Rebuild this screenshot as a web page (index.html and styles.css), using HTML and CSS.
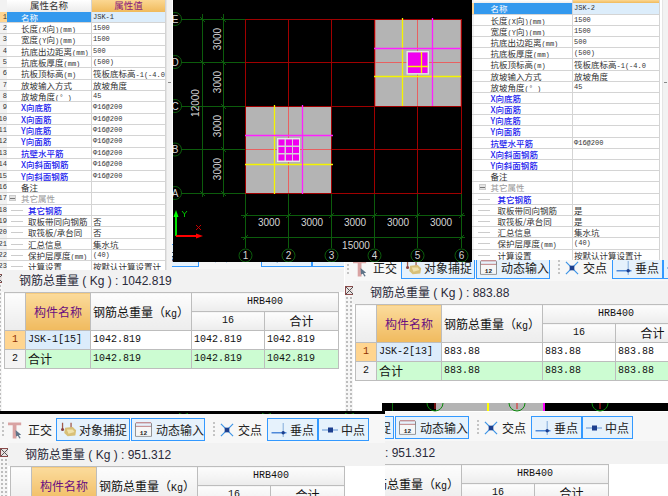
FILE: index.html
```html
<!DOCTYPE html>
<html lang="zh">
<head>
<meta charset="utf-8">
<title>钢筋总重量</title>
<link rel="stylesheet" href="styles.css">
</head>
<body>
<svg class="defs" width="0" height="0" aria-hidden="true">
  <symbol id="i-ortho" viewBox="0 0 17 18">
    <path d="M0 1h14v3H9v14H5V4H0z" fill="#d9a3a3"/>
    <path d="M8 9l6 5-2.500 .5 2 3-1.500 .5-1.500-3L8.500 16z" fill="#5f7488"/>
  </symbol>
  <symbol id="i-snap" viewBox="0 0 20 18">
    <path d="M3 1v8M13 1v8" stroke="#a05a4a" stroke-width="1.500"/>
    <circle cx="3" cy="9" r="1.800" fill="#8a4040"/>
    <path d="M6 7l9-1 4 4-1 6-9 1-4-4z" fill="#d8c078"/>
    <path d="M8 9l7 0 2 3-7 2z" fill="#efe2ac"/>
  </symbol>
  <symbol id="i-dyn" viewBox="0 0 19 16">
    <path d="M1 .5h17M1 4.500h17" stroke="#b05a5a" fill="none"/>
    <path d="M.5 1v14.500h18V1" stroke="#777" fill="none"/>
    <rect x="1" y="5" width="17" height="10" fill="#f6f6f6"/>
    <text class="i-num" x="9.500" y="14" text-anchor="middle">12</text>
  </symbol>
  <symbol id="i-cross" viewBox="0 0 15 15">
    <path d="M1 1l13 13M14 1L1 14" stroke="#3d94e6" stroke-width="1.300"/>
    <rect x="5" y="5" width="5" height="5" fill="#1c3f8f"/>
  </symbol>
  <symbol id="i-perp" viewBox="0 0 16 15">
    <path d="M0 10.500h16" stroke="#2a6fd0" stroke-width="1.300"/>
    <path d="M12.500 0v15" stroke="#7aa6d8"/>
    <circle cx="12.500" cy="10.500" r="1.800" fill="#1c3f8f"/>
  </symbol>
  <symbol id="i-mid" viewBox="0 0 16 7">
    <path d="M0 3.500h16" stroke="#7fa8dc" stroke-width="1.300"/>
    <rect x="6" y="1" width="5" height="5" fill="#1c3f8f"/>
  </symbol>
  <symbol id="i-close" viewBox="0 0 9 9">
    <rect x=".5" y=".5" width="8" height="8" fill="#e8e0e0" stroke="#8a4a4a"/>
    <path d="M1 1l7 7M8 1L1 8" stroke="#555"/>
  </symbol>
</svg>

<section class="win win-left">
  <div class="toolbar">
    <span class="grip"></span>
    <span class="tool tool-first"><svg class="ic ic-o"><use href="#i-ortho"/></svg>正交</span>
    <span class="tool btn"><svg class="ic ic-s"><use href="#i-snap"/></svg>对象捕捉</span>
    <span class="tool btn"><svg class="ic ic-d"><use href="#i-dyn"/></svg>动态输入</span>
    <span class="grip grip-2"></span>
    <span class="tool tool-x"><svg class="ic ic-x"><use href="#i-cross"/></svg>交点</span>
    <span class="tool btn btn-s"><svg class="ic ic-p"><use href="#i-perp"/></svg>垂点</span>
    <span class="tool btn btn-s"><svg class="ic ic-p"><use href="#i-mid"/></svg>中点</span>
  </div>
  <div class="body">
    <div class="strip"><svg class="close"><use href="#i-close"/></svg></div>
    <div class="main">
      <div class="title">钢筋总重量 ( Kg ) : 1042.819</div>
      <table class="grid">
        <colgroup><col class="c0"><col class="c1"><col class="c2"><col class="c3"><col class="c4"></colgroup>
        <thead>
          <tr><th rowspan="2"></th><th rowspan="2" class="hl">构件名称</th><th rowspan="2" class="cn lead">钢筋总重量（<span class="mono">Kg</span>）</th><th colspan="2">HRB400</th></tr>
          <tr><th>16</th><th class="cn">合计</th></tr>
        </thead>
        <tbody>
          <tr><td class="idx sel">1</td><td class="pick">JSK-1[15]</td><td>1042.819</td><td>1042.819</td><td>1042.819</td></tr>
          <tr class="sum"><td class="idx">2</td><td class="cn">合计</td><td>1042.819</td><td>1042.819</td><td>1042.819</td></tr>
        </tbody>
      </table>
    </div>
  </div>
</section>

<section class="win win-right">
  <div class="toolbar">
    <span class="grip"></span>
    <span class="tool tool-first"><svg class="ic ic-o"><use href="#i-ortho"/></svg>正交</span>
    <span class="tool btn"><svg class="ic ic-s"><use href="#i-snap"/></svg>对象捕捉</span>
    <span class="tool btn"><svg class="ic ic-d"><use href="#i-dyn"/></svg>动态输入</span>
    <span class="grip grip-2"></span>
    <span class="tool tool-x"><svg class="ic ic-x"><use href="#i-cross"/></svg>交点</span>
    <span class="tool btn btn-s"><svg class="ic ic-p"><use href="#i-perp"/></svg>垂点</span>
    <span class="tool btn btn-s"><svg class="ic ic-p"><use href="#i-mid"/></svg>中点</span>
  </div>
  <div class="body">
    <div class="strip"><svg class="close"><use href="#i-close"/></svg></div>
    <div class="main">
      <div class="title">钢筋总重量 ( Kg ) : 883.88</div>
      <table class="grid">
        <colgroup><col class="c0"><col class="c1"><col class="c2"><col class="c3"><col class="c4"></colgroup>
        <thead>
          <tr><th rowspan="2"></th><th rowspan="2" class="hl">构件名称</th><th rowspan="2" class="cn lead">钢筋总重量（<span class="mono">Kg</span>）</th><th colspan="2">HRB400</th></tr>
          <tr><th>16</th><th class="cn">合计</th></tr>
        </thead>
        <tbody>
          <tr><td class="idx sel">1</td><td class="pick">JSK-2[13]</td><td>883.88</td><td>883.88</td><td>883.88</td></tr>
          <tr class="sum"><td class="idx">2</td><td class="cn">合计</td><td>883.88</td><td>883.88</td><td>883.88</td></tr>
        </tbody>
      </table>
    </div>
  </div>
</section>

<svg class="cad" viewBox="0 0 299 262" role="img" aria-label="基础平面图">
  <rect width="299" height="262" fill="#000"/>
  <g transform="translate(-173 0)">
    <g class="gl">
      <path d="M181 19.500H246M181 62.500H246M181 106.500H246M181 149.500H246M181 193.500H246"/>
      <path d="M245.500 193V248M288.500 193V248M331.500 193V248M374.500 193V248M417.500 193V248M461.500 193V248"/>
      <path d="M202.500 14V197M223.500 14V197M241 215.500H465M241 237.500H465"/>
      <path d="M200 17l5 5M221 17l5 5M200 60l5 5M221 60l5 5M221 104l5 5M221 147l5 5M200 191l5 5M221 191l5 5"/>
      <path d="M243 218l5-5M286 218l5-5M329 218l5-5M372 218l5-5M415 218l5-5M459 218l5-5M243 240l5-5M459 240l5-5"/>
      <circle cx="175" cy="19" r="6.500"/><circle cx="175" cy="62" r="6.500"/><circle cx="175" cy="106" r="6.500"/><circle cx="175" cy="149.500" r="6.500"/><circle cx="175" cy="193" r="6.500"/>
      <circle cx="245.500" cy="255.500" r="6.500"/><circle cx="288.500" cy="255.500" r="6.500"/><circle cx="331.500" cy="255.500" r="6.500"/><circle cx="374.500" cy="255.500" r="6.500"/><circle cx="417.500" cy="255.500" r="6.500"/><circle cx="461.500" cy="255.500" r="6.500"/>
    </g>
    <rect class="slab" x="245.500" y="106.500" width="86" height="87"/>
    <rect class="slab" x="375" y="19.500" width="86" height="87"/>
    <path class="rd" d="M245.500 19.500H461.500M245.500 62.500H461.500M245.500 106.500H461.500M245.500 149.500H461.500M245.500 193.500H461.500M245.500 19.500V193.500M288.500 19.500V193.500M331.500 19.500V193.500M374.500 19.500V193.500M417.500 19.500V193.500M461.500 19.500V193.500"/>
    <path class="lr" d="M375 62.500H461M417.500 20V106M246 149.500H331M288.500 107V193"/>
    <path class="ye" d="M274.500 105V194M245 164.500H333M402.500 18V106M374 76.500H461"/>
    <path class="ma" d="M302.500 105V194M245 135.500H333M432.500 18V106M374 48.500H461"/>
    <rect class="blk" x="277.500" y="138.500" width="22" height="23"/>
    <rect class="blk" x="407" y="51.500" width="21.500" height="22.500"/>
    <g class="sq">
      <rect x="278.500" y="139.500" width="6" height="6"/><rect x="286" y="139.500" width="6" height="6"/><rect x="293" y="139.500" width="6" height="6"/>
      <rect x="278.500" y="147" width="6" height="6"/><rect x="286" y="147" width="6" height="6"/><rect x="293" y="147" width="6" height="6"/>
      <rect x="278.500" y="154.500" width="6" height="6"/><rect x="286" y="154.500" width="6" height="6"/><rect x="293" y="154.500" width="6" height="6"/>
      <rect x="408" y="52.500" width="19.500" height="20.500"/>
    </g>
    <path class="ye" d="M421.500 52V73M408 66.500H428"/>
    <g class="dim">
      <text x="269" y="226">3000</text><text x="312" y="226">3000</text><text x="355" y="226">3000</text><text x="398" y="226">3000</text><text x="441" y="226">3000</text>
      <text x="356" y="248.500">15000</text>
      <text transform="translate(220.500 39) rotate(-90)">3000</text>
      <text transform="translate(220.500 82) rotate(-90)">3000</text>
      <text transform="translate(220.500 126) rotate(-90)">3000</text>
      <text transform="translate(220.500 169) rotate(-90)">3000</text>
      <text transform="translate(199 103) rotate(-90)">12000</text>
      <text x="175" y="22.500">E</text><text x="175" y="65.500">D</text><text x="175" y="109.500">C</text><text x="175" y="153">B</text><text x="175" y="196.500">A</text>
      <text x="245.500" y="259">1</text><text x="288.500" y="259">2</text><text x="331.500" y="259">3</text><text x="374.500" y="259">4</text><text x="417.500" y="259">5</text><text x="461.500" y="259">6</text>
    </g>
    <path class="ax-y" d="M176 236V215"/>
    <path d="M176 210l-2.500 7h5z" fill="#00ff00"/>
    <path class="ax-x" d="M176 236H198"/>
    <path d="M203 236l-7-2.500v5z" fill="#ff0000"/>
    <path d="M182 211l2.500 3 2.500-3M184.500 214v3" stroke="#00c000" fill="none"/>
    <path d="M196 225l5 5M201 225l-5 5" stroke="#c00000" fill="none"/>
  </g>
</svg>

<aside class="props props-left">
  <div class="ph"><span class="pi"></span><span class="pn">属性名称</span><span class="pv">属性值</span></div>
  <div class="pr on"><span class="pi">1</span><span class="pn">名称</span><span class="pv m">JSK-1</span></div>
  <div class="pr"><span class="pi">2</span><span class="pn">长度<i class="m">(X</i>向<i class="m">)(mm)</i></span><span class="pv m">1500</span></div>
  <div class="pr"><span class="pi">3</span><span class="pn">宽度<i class="m">(Y</i>向<i class="m">)(mm)</i></span><span class="pv m">1500</span></div>
  <div class="pr"><span class="pi">4</span><span class="pn">抗底出边距离<i class="m">(mm)</i></span><span class="pv m">500</span></div>
  <div class="pr"><span class="pi">5</span><span class="pn">抗底板厚度<i class="m">(mm)</i></span><span class="pv m">(500)</span></div>
  <div class="pr"><span class="pi">6</span><span class="pn">抗板顶标高<i class="m">(m)</i></span><span class="pv">筏板底标高<i class="m">-1(-4.0</i></span></div>
  <div class="pr"><span class="pi">7</span><span class="pn">放坡输入方式</span><span class="pv">放坡角度</span></div>
  <div class="pr"><span class="pi">8</span><span class="pn">放坡角度<i class="m">(° )</i></span><span class="pv m">45</span></div>
  <div class="pr"><span class="pi">9</span><span class="pn bl">X向底筋</span><span class="pv m">Φ16@200</span></div>
  <div class="pr"><span class="pi">10</span><span class="pn bl">X向面筋</span><span class="pv m">Φ16@200</span></div>
  <div class="pr"><span class="pi">11</span><span class="pn bl">Y向底筋</span><span class="pv m">Φ16@200</span></div>
  <div class="pr"><span class="pi">12</span><span class="pn bl">Y向面筋</span><span class="pv m">Φ16@200</span></div>
  <div class="pr"><span class="pi">13</span><span class="pn bl">抗壁水平筋</span><span class="pv m">Φ16@200</span></div>
  <div class="pr"><span class="pi">14</span><span class="pn bl">X向斜面钢筋</span><span class="pv m">Φ16@200</span></div>
  <div class="pr"><span class="pi">15</span><span class="pn bl">Y向斜面钢筋</span><span class="pv m">Φ16@200</span></div>
  <div class="pr"><span class="pi">16</span><span class="pn">备注</span><span class="pv"></span></div>
  <div class="pr"><span class="pi">17</span><span class="pn grp"><b class="minus"></b>其它属性</span><span class="pv"></span></div>
  <div class="pr"><span class="pi">18</span><span class="pn kid bl">其它钢筋</span><span class="pv"></span></div>
  <div class="pr"><span class="pi">19</span><span class="pn kid">取板带同向钢筋</span><span class="pv">否</span></div>
  <div class="pr"><span class="pi">20</span><span class="pn kid">取筏板/承台同</span><span class="pv">否</span></div>
  <div class="pr"><span class="pi">21</span><span class="pn kid">汇总信息</span><span class="pv">集水坑</span></div>
  <div class="pr"><span class="pi">22</span><span class="pn kid">保护层厚度<i class="m">(mm)</i></span><span class="pv m">(40)</span></div>
  <div class="pr"><span class="pi">23</span><span class="pn kid">计算设置</span><span class="pv">按默认计算设置计</span></div>
  <div class="sb"></div>
</aside>

<aside class="props props-right">
  <div class="ph"><span class="pi"></span><span class="pn"></span><span class="pv"></span></div>
  <div class="pr on"><span class="pi"></span><span class="pn">名称</span><span class="pv m">JSK-2</span></div>
  <div class="pr"><span class="pi"></span><span class="pn">长度<i class="m">(X</i>向<i class="m">)(mm)</i></span><span class="pv m">1500</span></div>
  <div class="pr"><span class="pi"></span><span class="pn">宽度<i class="m">(Y</i>向<i class="m">)(mm)</i></span><span class="pv m">1500</span></div>
  <div class="pr"><span class="pi"></span><span class="pn">抗底出边距离<i class="m">(mm)</i></span><span class="pv m">500</span></div>
  <div class="pr"><span class="pi"></span><span class="pn">抗底板厚度<i class="m">(mm)</i></span><span class="pv m">(500)</span></div>
  <div class="pr"><span class="pi"></span><span class="pn">抗板顶标高<i class="m">(m)</i></span><span class="pv">筏板底标高<i class="m">-1(-4.0</i></span></div>
  <div class="pr"><span class="pi"></span><span class="pn">放坡输入方式</span><span class="pv">放坡角度</span></div>
  <div class="pr"><span class="pi"></span><span class="pn">放坡角度<i class="m">(° )</i></span><span class="pv m">45</span></div>
  <div class="pr"><span class="pi"></span><span class="pn bl">X向底筋</span><span class="pv"></span></div>
  <div class="pr"><span class="pi"></span><span class="pn bl">X向面筋</span><span class="pv"></span></div>
  <div class="pr"><span class="pi"></span><span class="pn bl">Y向底筋</span><span class="pv"></span></div>
  <div class="pr"><span class="pi"></span><span class="pn bl">Y向面筋</span><span class="pv"></span></div>
  <div class="pr"><span class="pi"></span><span class="pn bl">抗壁水平筋</span><span class="pv m">Φ16@200</span></div>
  <div class="pr"><span class="pi"></span><span class="pn bl">X向斜面钢筋</span><span class="pv"></span></div>
  <div class="pr"><span class="pi"></span><span class="pn bl">Y向斜面钢筋</span><span class="pv"></span></div>
  <div class="pr"><span class="pi"></span><span class="pn">备注</span><span class="pv"></span></div>
  <div class="pr"><span class="pi"></span><span class="pn grp"><b class="minus"></b>其它属性</span><span class="pv"></span></div>
  <div class="pr"><span class="pi"></span><span class="pn kid bl">其它钢筋</span><span class="pv"></span></div>
  <div class="pr"><span class="pi"></span><span class="pn kid">取板带同向钢筋</span><span class="pv">是</span></div>
  <div class="pr"><span class="pi"></span><span class="pn kid">取筏板/承台同</span><span class="pv">是</span></div>
  <div class="pr"><span class="pi"></span><span class="pn kid">汇总信息</span><span class="pv">集水坑</span></div>
  <div class="pr"><span class="pi"></span><span class="pn kid">保护层厚度<i class="m">(mm)</i></span><span class="pv m">(40)</span></div>
  <div class="pr"><span class="pi"></span><span class="pn kid">计算设置</span><span class="pv">按默认计算设置计</span></div>
  <div class="sb"></div>
</aside>

<section class="win win-bottom">
  <div class="toolbar">
    <span class="grip"></span>
    <span class="tool tool-first"><svg class="ic ic-o"><use href="#i-ortho"/></svg>正交</span>
    <span class="tool btn"><svg class="ic ic-s"><use href="#i-snap"/></svg>对象捕捉</span>
    <span class="tool btn"><svg class="ic ic-d"><use href="#i-dyn"/></svg>动态输入</span>
    <span class="grip grip-2"></span>
    <span class="tool tool-x"><svg class="ic ic-x"><use href="#i-cross"/></svg>交点</span>
    <span class="tool btn btn-s"><svg class="ic ic-p"><use href="#i-perp"/></svg>垂点</span>
    <span class="tool btn btn-s"><svg class="ic ic-p"><use href="#i-mid"/></svg>中点</span>
  </div>
  <div class="body">
    <div class="strip"><svg class="close"><use href="#i-close"/></svg></div>
    <div class="main">
      <div class="title">钢筋总重量 ( Kg ) : 951.312</div>
      <table class="grid">
        <colgroup><col class="c0"><col class="c1"><col class="c2"><col class="c3"><col class="c4"></colgroup>
        <thead>
          <tr><th rowspan="2"></th><th rowspan="2" class="hl">构件名称</th><th rowspan="2" class="cn lead">钢筋总重量（<span class="mono">Kg</span>）</th><th colspan="2">HRB400</th></tr>
          <tr><th>16</th><th class="cn">合计</th></tr>
        </thead>
      </table>
    </div>
  </div>
</section>

<section class="win win-bottom win-shift">
  <div class="toolbar">
    <span class="grip"></span>
    <span class="tool tool-first"><svg class="ic ic-o"><use href="#i-ortho"/></svg>正交</span>
    <span class="tool btn"><svg class="ic ic-s"><use href="#i-snap"/></svg>对象捕捉</span>
    <span class="tool btn"><svg class="ic ic-d"><use href="#i-dyn"/></svg>动态输入</span>
    <span class="grip grip-2"></span>
    <span class="tool tool-x"><svg class="ic ic-x"><use href="#i-cross"/></svg>交点</span>
    <span class="tool btn btn-s"><svg class="ic ic-p"><use href="#i-perp"/></svg>垂点</span>
    <span class="tool btn btn-s"><svg class="ic ic-p"><use href="#i-mid"/></svg>中点</span>
  </div>
  <div class="body">
    <div class="strip"></div>
    <div class="main">
      <div class="title">钢筋总重量 ( Kg ) : 951.312</div>
      <table class="grid">
        <colgroup><col class="c0"><col class="c1"><col class="c2"><col class="c3"><col class="c4"></colgroup>
        <thead>
          <tr><th rowspan="2"></th><th rowspan="2" class="hl">构件名称</th><th rowspan="2" class="cn lead">钢筋总重量（<span class="mono">Kg</span>）</th><th colspan="2">HRB400</th></tr>
          <tr><th>16</th><th class="cn">合计</th></tr>
        </thead>
      </table>
    </div>
  </div>
</section>

<svg class="cut" viewBox="0 0 668 14" aria-hidden="true">
  <path d="M382 0H668V8H385V11H0V8H382z" fill="#000"/>
  <rect x="436" y="0" width="109" height="8" fill="#b4b4b4"/>
  <path d="M392.500 0V8" stroke="#0a6a0a"/>
  <path d="M488 0V8" stroke="#ffff00" stroke-width="2"/>
  <path d="M544 0V8" stroke="#ff00ff" stroke-width="2"/>
  <path d="M435 0V6M517 0V6M600 0V6" stroke="#e02020"/>
  <circle cx="435" cy="0" r="8" class="cut-c"/>
  <circle cx="517" cy="0" r="8" class="cut-c"/>
  <circle cx="600" cy="0" r="8" class="cut-c"/>
  <path d="M179 10.500q4.500 3 9 0M262 10.500q4.500 3 9 0M345 10.500q4.500 3 9 0" class="cut-c"/>
</svg>
</body>
</html>
```
FILE: styles.css
```css
* { box-sizing: border-box; }
html, body { margin: 0; padding: 0; }
body {
  width: 668px;
  height: 496px;
  overflow: hidden;
  position: relative;
  background: #fff;
  font-family: "Noto Sans CJK SC", "Liberation Sans", sans-serif;
  color: #222;
}
.defs { position: absolute; }
.i-num { font: 700 7px "Liberation Mono", monospace; fill: #222; }

/* CAD canvas */
.cad { position: absolute; left: 173px; top: 0; width: 299px; height: 262px; z-index: 3; display: block; }
.gl { stroke: #0c5c0c; fill: none; }
.slab { fill: #b4b4b4; stroke: #e04848; }
.rd { stroke: #a00000; fill: none; }
.lr { stroke: #e86060; fill: none; }
.ye { stroke: #f4f400; stroke-width: 1.300; fill: none; }
.ma { stroke: #ff20ff; stroke-width: 1.300; fill: none; }
.blk { fill: #d8d0d8; stroke: #e8e8e8; }
.sq { fill: #f000f0; }
.dim text { font: 10px "Liberation Sans", sans-serif; fill: #d4d4d4; text-anchor: middle; }
.ax-y { stroke: #00e000; stroke-width: 2; }
.ax-x { stroke: #ff0000; stroke-width: 2; }
.cut { position: absolute; left: 0; top: 403px; width: 668px; height: 14px; z-index: 6; display: block; }
.cut-c { stroke: #0a8a0a; fill: none; }

/* Property panels */
.props {
  position: absolute;
  top: 0;
  z-index: 4;
  background: #fff;
  overflow: hidden;
  font-size: 8.500px;
}
.props-left { left: 0; width: 172px; height: 270px; --w-i: 7px; --w-n: 85px; --w-v: 74px; --pad: 14px; --rh: 11.350px; --hh: 11.700px; }
.props-right { left: 472px; width: 196px; height: 260px; --w-i: 1.500px; --w-n: 99.500px; --w-v: 87px; --pad: 17px; --rh: 11.200px; --hh: 3.400px; }
.ph, .pr {
  display: grid;
  grid-template-columns: var(--w-i) var(--w-n) var(--w-v);
  width: calc(var(--w-i) + var(--w-n) + var(--w-v));
}
.ph { height: var(--hh); line-height: var(--hh); font-size: 9.500px; background: linear-gradient(#fff, #ececec); }
.ph .pn { text-align: center; color: #333; padding: 0; }
.ph .pv { text-align: center; color: #8a1a7a; padding: 0; background: linear-gradient(#fbd792, #f0ba5c); }
.pr { height: var(--rh); line-height: calc(var(--rh) - 1px); border-bottom: 1px solid #d4d4d4; white-space: nowrap; }
.pi { overflow: hidden; direction: rtl; font: 7px/10px "Liberation Mono", monospace; color: #333; background: #f2f2f2; }
.pn { padding-left: var(--pad); border-right: 1px solid #d4d4d4; color: #333; overflow: hidden; }
.pv { padding-left: 1px; border-right: 1px solid #d4d4d4; color: #333; overflow: hidden; }
.m { font-family: "Liberation Mono", monospace; font-size: 7px; font-style: normal; }
.pn.bl { color: #2222ee; font-weight: 500; }
.on .pi { background: #ffd590; }
.on .pn { background: #3399ee; color: #fff; }
.on .pv { background: #dcedfb; }
.grp { color: #999; display: flex; align-items: center; padding-left: calc(var(--pad) - 12px); }
.minus {
  width: 7px; height: 6px; margin-right: 5px;
  background: linear-gradient(#777, #777) center / 5px 1px no-repeat #e4e4e4;
  border: 1px solid #ccc;
}
.kid { padding-left: calc(var(--pad) + 7px); background: linear-gradient(#ccc, #ccc) 4px 5px / 12px 1px no-repeat; }
.sb {
  position: absolute; right: 0; top: 0; bottom: 0; width: 6px;
  background: linear-gradient(#888, #888) center 82px / 3px 1px no-repeat, #f2f2f2;
  border-left: 1px solid #e4e4e4;
}

/* Summary windows */
.win {
  position: absolute;
  display: flex;
  flex-direction: column;
  overflow: hidden;
  background: #fff;
}
.win-left { left: -6px; top: 240px; width: 350px; height: 171px; z-index: 1; }
.win-right { left: 345px; top: 252px; width: 323px; height: 159px; z-index: 2; }
.win-bottom { left: 0; top: 414px; width: 385px; height: 82px; z-index: 7; }
.win-shift { left: 264px; top: 412px; width: 404px; height: 84px; z-index: 8; clip-path: inset(0 0 0 121px); }

.toolbar {
  display: flex;
  align-items: center;
  flex: none;
  height: 29px;
  padding: 4px 0 2px 2px;
  background: #f7f7f7;
  font-size: 12px;
  line-height: 23px;
  color: #222;
  white-space: nowrap;
}
.grip {
  width: 2px; height: 16px; flex: none;
  background: repeating-linear-gradient(#c4c4c4 0 2px, transparent 2px 4px);
}
.grip-2 { margin: 0 5px 0 7px; }
.tool { display: flex; align-items: center; height: 23px; flex: none; }
.tool-first { width: 44px; margin: 0 4px 0 4px; }
.tool-x { width: 42px; margin-right: 5px; }
.btn {
  width: 74px;
  margin-right: 1px;
  padding-left: 3px;
  border: 1px solid #3399ff;
  background: #e6f2fc;
}
.btn-s { width: 51px; margin-right: 0; }
.ic { flex: none; margin-right: 4px; }
.ic-o { width: 16px; height: 18px; margin-top: 1px; }
.ic-s { width: 17px; height: 17px; margin-right: 2px; }
.ic-d { width: 17px; height: 15px; margin-right: 4px; }
.ic-x { width: 14px; height: 14px; margin-right: 4px; }
.ic-p { width: 16px; height: 14px; margin-right: 3px; }

.body { display: flex; flex: 1; min-height: 0; }
.strip {
  width: 8px;
  flex: none;
  background:
    repeating-linear-gradient(#bdbdbd 0 2px, transparent 2px 4px) 1px 16px / 2px 100% no-repeat,
    repeating-linear-gradient(#bdbdbd 0 2px, transparent 2px 4px) 5px 16px / 2px 100% no-repeat,
    #f6f6f6;
}
.close { display: block; width: 9px; height: 9px; margin-top: 5px; }
.main { flex: 1; min-width: 0; }
.title {
  height: 23px;
  padding-left: 17px;
  font: 12px/24px "Liberation Sans", "Noto Sans CJK SC", sans-serif;
  color: #2a2a3a;
  background: #f2f2f2;
  white-space: pre;
}
.grid {
  table-layout: fixed;
  border-collapse: collapse;
  width: 334px;
  margin-left: 2px;
  font: 10px/18px "Liberation Mono", monospace;
  color: #111;
  background: #fff;
}
.c0 { width: 21px; }
.c1 { width: 65px; }
.c2 { width: 101px; }
.c3 { width: 73px; }
.c4 { width: 74px; }
.grid th, .grid td {
  height: 19px;
  padding: 0 0 0 2px;
  border: 1px solid #bdbdbd;
  overflow: hidden;
  white-space: nowrap;
  font-weight: 400;
}
.grid th {
  padding: 0;
  text-align: center;
  background: linear-gradient(#fdfdfd, #ececec);
}
.grid .cn { font: 12px/18px "Noto Sans CJK SC", sans-serif; }
.grid .lead { text-align: left; padding-left: 2px; }
.grid th.hl {
  font: 12px/18px "Noto Sans CJK SC", sans-serif;
  color: #6a0f80;
  background: linear-gradient(#fbdb9c, #f0ba5e);
}
.mono { font: 10px "Liberation Mono", monospace; }
.grid .idx { text-align: center; padding: 0; background: #f4f4f4; }
.grid .sel { background: #ffd590; color: #903000; }
.grid .pick { background: #dcecfb; }
.sum td { background: #ccfcd2; }
```
